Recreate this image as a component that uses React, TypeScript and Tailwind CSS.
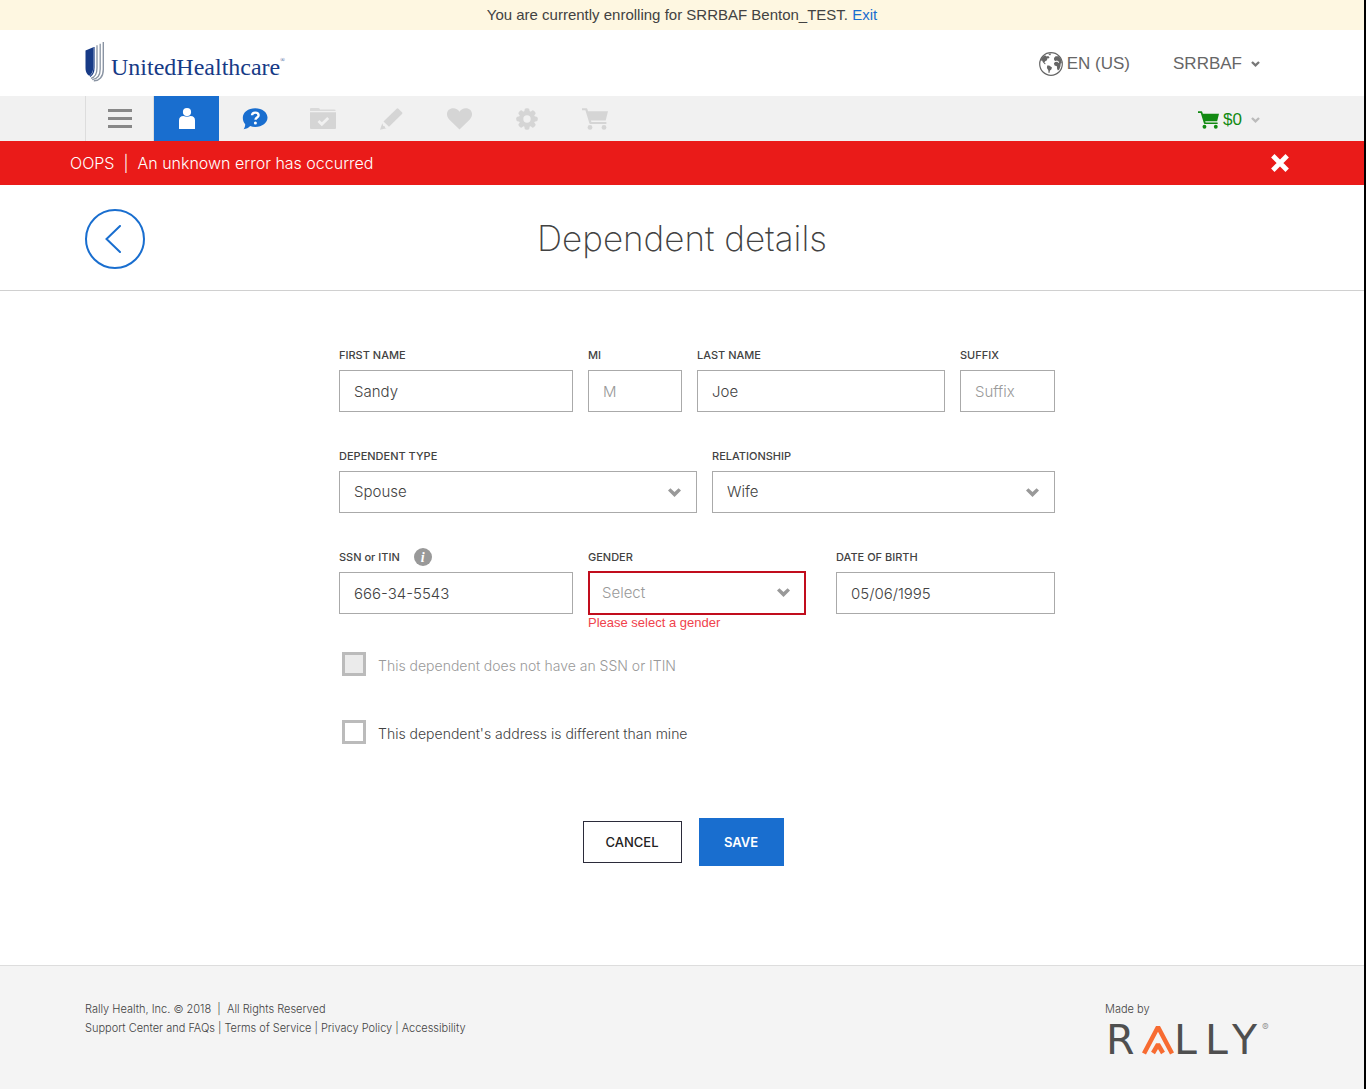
import type { ReactNode } from "react";

const sans = "font-['Liberation_Sans',Arial,sans-serif]";
const light = "font-['Inter',sans-serif] font-light";

function Shield() {
  return (
    <svg viewBox="0 0 20 41" className="mb-1 h-[41px] w-5" aria-hidden="true">
      <path d="M0.5 9.5 L8.3 6.3 V26 C8.3 30 7 33 4.5 34.8 C1.5 33.5 0.5 30 0.5 27 Z" fill="#173a86" />
      <path d="M9 6 V26.5 C9 31.5 7.500 34 5 35.500" fill="none" stroke="#173a86" strokeWidth="1.200" />
      <path d="M12 4.300 V27 C12 33 9.800 36.300 6 37.300" fill="none" stroke="#8a94a3" strokeWidth="1.300" />
      <path d="M15.200 2.700 V28 C15.200 34.500 12 38 7.200 38.600" fill="none" stroke="#8a94a3" strokeWidth="1.300" />
      <path d="M18.300 1 V28.500 C18.300 36 14 40 8.800 39.800" fill="none" stroke="#8a94a3" strokeWidth="1.400" />
    </svg>
  );
}

function Cart({ className }: { className: string }) {
  return (
    <svg viewBox="0 0 26 22" className={className} fill="currentColor" aria-hidden="true">
      <path d="M0 .3h4.2c.7 0 1 .4 1.2 1L6 3.2h20l-2.3 9.3H8.9l.5 1.500h14.3c1.200 0 1.200 2 0 2H8.400c-.6 0-.9-.3-1.100-.9L3.400 2.200H0z" />
      <circle cx="8" cy="19.400" r="2.400" />
      <circle cx="22" cy="19.400" r="2.400" />
    </svg>
  );
}

function Caret({ className }: { className: string }) {
  return (
    <svg viewBox="0 0 13 9" className={className} fill="currentColor" aria-hidden="true">
      <path d="M0 2.600L2.400.300 6.500 4.100 10.600.300 13 2.600 6.500 9z" />
    </svg>
  );
}

function Globe() {
  return (
    <svg viewBox="0 0 24 24" className="size-6" aria-hidden="true">
      <circle cx="12" cy="12" r="11.300" fill="none" stroke="#666" strokeWidth="1.200" />
      <g fill="#666">
        <path d="M2.200 6.500L5 3.700 6.600 3.600 7.600 4.400 9.200 4 10.600 5.400 9.400 6.400 8.400 6.300 8 8.200 6.200 9.200 5.400 10.400 6.900 12 5.800 12.200 3.900 10.200 3.100 8.500 2 8.800z" />
        <path d="M8.200 13.600L10.200 13.600 13 15.400 12.300 17.400 11 18.600 10.400 20.900 9.600 20.900 9.300 18.200 7.900 16z" />
        <path d="M9 1.800L12.400 1.500 11 3.400z" />
        <path d="M15 6L16.600 4.200 19.800 4.300 22 7.600 22.800 11 21.700 11.600 21.400 14.400 20.300 17.400 18.900 18.600 18.100 16.800 17.900 14.200 15.600 13.600 14.900 11.600 16 10 18.300 9.800 19.400 10.900 20.300 10 18 8.600 16.200 9 15.100 8z" />
      </g>
    </svg>
  );
}

const navIcons: { label: string; color: string; icon: ReactNode }[] = [
  {
    label: "Help",
    color: "text-[#196ecf]",
    icon: (
      <svg viewBox="0 0 26 22" className="h-[22px] w-[26px]" aria-hidden="true">
        <path d="M13.2.3c7 0 12.3 4.1 12.3 9.3S20.200 19 13.200 19c-1.900 0-3.500-.3-5-.9C6.500 19.900 4.300 21 1.600 21.300c1-1.300 1.600-3.100 1.600-5.100C1.600 14.500.800 12.200.800 9.700.800 4.400 6.200.3 13.200.3z" fill="currentColor" />
        <path d="M10 7.300C10.100 5.500 11.400 4.600 13.200 4.600c2 0 3.400 1 3.400 2.600 0 2.300-3.100 2.400-3.100 4.600" fill="none" stroke="#fff" strokeWidth="2.400" />
        <circle cx="13.400" cy="14.900" r="1.500" fill="#fff" />
      </svg>
    ),
  },
  {
    label: "Plans",
    color: "text-[#d5d5d5]",
    icon: (
      <svg viewBox="0 0 26 21" className="h-[21px] w-[26px]" aria-hidden="true">
        <path d="M0 3V1q0-1 1-1h7.500q1 0 1.300 1l.3.500H24.500q1 0 1 1V3z" fill="currentColor" opacity=".8" />
        <path d="M0 4.200H26V20q0 1-1 1H1q-1 0-1-1z" fill="currentColor" />
        <path d="M8.500 13l3.300 3.200 6.400-6.300" fill="none" stroke="#f1f1f1" strokeWidth="2.800" />
      </svg>
    ),
  },
  {
    label: "Edit",
    color: "text-[#d5d5d5]",
    icon: (
      <svg viewBox="0 0 23 22" className="h-[22px] w-[23px]" fill="currentColor" aria-hidden="true">
        <path d="M16.600.700q.9-.8 1.800 0l3.600 3.500q.8.900 0 1.800L9 18.800 3.500 13.500z" />
        <path d="M2.300 15.300l1 2.700 1.400.2.400 1.500 1.500.5L0 21.700z" />
      </svg>
    ),
  },
  {
    label: "Health",
    color: "text-[#d5d5d5]",
    icon: (
      <svg viewBox="0 0 25 22" className="h-[22px] w-[25px]" fill="currentColor" aria-hidden="true">
        <path d="M12.500 21.500L2.200 11.500C-2.300 6.500.500.300 6.200.300c2.700 0 5 1.400 6.300 3.400C13.800 1.700 16.100.300 18.800.300c5.700 0 8.500 6.200 4 11.200z" />
      </svg>
    ),
  },
  {
    label: "Settings",
    color: "text-[#d5d5d5]",
    icon: (
      <svg viewBox="-11 -11 22 22" className="size-[22px]" aria-hidden="true">
        <g fill="currentColor">
          {[0, 45, 90, 135].map((a) => (
            <rect key={a} x="-2.500" y="-10.700" width="5" height="21.400" rx="1.800" transform={`rotate(${a})`} />
          ))}
          <circle r="8.200" />
        </g>
        <circle r="3.700" fill="#f1f1f1" />
      </svg>
    ),
  },
  { label: "Checkout", color: "text-[#d5d5d5]", icon: <Cart className="h-[22px] w-[26px]" /> },
];

function Field({ id, label, error, info, children }: { id: string; label: string; error?: string; info?: boolean; children: ReactNode }) {
  return (
    <div className="relative min-w-0">
      <div className="flex h-5 items-center gap-[14px]">
        <label htmlFor={id} className="font-['Inter',sans-serif] text-[11px] font-medium text-[#424242]">{label}</label>
        {info && (
          <button type="button" aria-label="About SSN or ITIN" className="flex size-[18px] items-center justify-center rounded-full bg-[#999] font-['Liberation_Serif',serif] text-[14px] font-bold italic text-white">i</button>
        )}
      </div>
      <div className="mt-[5px]">{children}</div>
      {error && <p className={`${sans} absolute top-full left-0 text-[13px] leading-[18px] text-[#f0424c]`}>{error}</p>}
    </div>
  );
}

const box = "block w-full appearance-none rounded-none bg-white text-[15px] outline-none";

function TextBox({ id, value, placeholder }: { id: string; value?: string; placeholder?: string }) {
  return <input id={id} type="text" defaultValue={value} placeholder={placeholder} className={`${box} ${light} h-[42px] border border-[#aaa] px-[14px] text-[#424242] placeholder:text-[#999]`} />;
}

function SelectBox({ id, value, invalid }: { id: string; value: string; invalid?: boolean }) {
  return (
    <div className="relative">
      <select
        id={id}
        defaultValue={value}
        aria-invalid={invalid}
        className={`${box} ${light} ${invalid ? "-my-px h-11 border-2 border-[#c10d1d] px-3 text-[#999]" : "h-[42px] border border-[#aaa] px-[14px] text-[#424242]"}`}
      >
        <option>{value}</option>
      </select>
      <Caret className="pointer-events-none absolute top-[17px] right-4 h-[9px] w-[13px] text-[#999]" />
    </div>
  );
}

function Check({ id, label, disabled }: { id: string; label: string; disabled?: boolean }) {
  return (
    <div className="flex items-center gap-3 pl-[3px]">
      <input id={id} type="checkbox" disabled={disabled} className="size-6 appearance-none border-3 border-[#bbb] bg-white checked:bg-[#196ecf] disabled:bg-[#ebebeb]" />
      <label htmlFor={id} className={`${light} pt-[2px] text-[14px] ${disabled ? "text-[#999]" : "text-[#424242]"}`}>{label}</label>
    </div>
  );
}

const shell = "mx-auto w-full max-w-[1194px]";

export default function App() {
  return (
    <div className={`${sans} flex min-h-screen flex-col border-r-2 border-black bg-white text-[#424242]`}>
      <div className="flex h-[30px] items-center justify-center bg-[#fef7e1] text-[15px]">
        <p>You are currently enrolling for SRRBAF Benton_TEST. <a href="#exit" className="text-[#196ecf]">Exit</a></p>
      </div>

      <header className={`${shell} flex h-[66px] items-center justify-between`}>
        <a href="#home" aria-label="UnitedHealthcare" className="flex items-center gap-[6px]">
          <Shield />
          <span className="relative pt-2 font-['Liberation_Serif',serif] text-[24px] leading-8 text-[#173a86]">
            UnitedHealthcare<span className="absolute top-[14px] left-full text-[6px] leading-none">®</span>
          </span>
        </a>
        <div className="flex items-center gap-[43px] pt-[2px] pr-[19px] text-[17px] text-[#666]">
          <button type="button" className="flex items-center gap-1"><Globe />EN (US)</button>
          <button type="button" className="flex items-center gap-[9px]">SRRBAF<Caret className="h-[6px] w-[9px] text-[#777]" /></button>
        </div>
      </header>

      <nav className="bg-[#f1f1f1]">
        <div className={`${shell} flex h-[45px] items-stretch justify-between`}>
          <div className="flex items-stretch">
            <button type="button" aria-label="Menu" className="flex w-[69px] flex-col items-center justify-center gap-[5px] border-x border-[#ddd]">
              <span className="h-[3px] w-6 bg-[#888]" />
              <span className="h-[3px] w-6 bg-[#888]" />
              <span className="h-[3px] w-6 bg-[#888]" />
            </button>
            <button type="button" aria-label="Profile" className="mr-[2px] flex w-[65px] items-center justify-center bg-[#196ecf]">
              <svg viewBox="0 0 16 21" className="h-[21px] w-4" fill="#fff" aria-hidden="true">
                <circle cx="8" cy="4.100" r="4.100" />
                <path d="M0 20.500V12.500Q0 8 4.500 8 8 9.500 11.500 8 16 8 16 12.500V20.500q0 .500-.5.500H.500q-.500 0-.500-.5z" />
              </svg>
            </button>
            {navIcons.map((n) => (
              <button key={n.label} type="button" aria-label={n.label} className={`flex w-[68px] items-center justify-center ${n.color}`}>{n.icon}</button>
            ))}
          </div>
          <button type="button" className="flex items-center gap-1 pt-[3px] pr-[19px] text-[17px] text-[#128a12]">
            <Cart className="h-[18px] w-[21px]" />$0<Caret className="ml-[5px] h-[6px] w-[9px] text-[#bbb]" />
          </button>
        </div>
      </nav>

      <div role="alert" className="bg-[#ea1b19] text-white">
        <div className="mx-auto flex h-11 w-full max-w-[1224px] items-center justify-between pr-[5px]">
          <p className={`${light} text-base`}>OOPS&nbsp; |&nbsp; An unknown error has occurred</p>
          <button type="button" aria-label="Dismiss">
            <svg viewBox="0 0 18 18" className="size-[18px]" stroke="#fff" strokeWidth="4.800" aria-hidden="true">
              <path d="M1.800 1.800L16.200 16.200M16.200 1.800L1.800 16.200" />
            </svg>
          </button>
        </div>
      </div>

      <div className="border-b border-[#d0d0d0]">
        <div className={`${shell} grid h-[105px] grid-cols-[60px_1fr_60px] items-center pt-[2px]`}>
          <button type="button" aria-label="Back" className="flex size-[60px] items-center justify-center rounded-full border-2 border-[#196ecf] pr-1">
            <svg viewBox="0 0 16 28" className="h-7 w-4" fill="none" stroke="#196ecf" strokeWidth="2" strokeLinecap="round" aria-hidden="true">
              <path d="M15 1L1.500 14 15 27" />
            </svg>
          </button>
          <h1 className="pb-[2px] text-center font-['Inter',sans-serif] text-[35px] font-extralight leading-[48px]">Dependent details</h1>
        </div>
      </div>

      <main className="flex-1 px-4 pb-[99px]">
        <form className="mx-auto max-w-[746px] pt-[54px] pl-[30px]">
          <div className="grid grid-cols-[234fr_94fr_248fr_95fr] gap-[15px]">
            <Field id="first" label="FIRST NAME"><TextBox id="first" value="Sandy" /></Field>
            <Field id="mi" label="MI"><TextBox id="mi" placeholder="M" /></Field>
            <Field id="last" label="LAST NAME"><TextBox id="last" value="Joe" /></Field>
            <Field id="suffix" label="SUFFIX"><TextBox id="suffix" placeholder="Suffix" /></Field>
          </div>
          <div className="mt-[34px] grid grid-cols-[358fr_343fr] gap-[15px]">
            <Field id="type" label="DEPENDENT TYPE"><SelectBox id="type" value="Spouse" /></Field>
            <Field id="relationship" label="RELATIONSHIP"><SelectBox id="relationship" value="Wife" /></Field>
          </div>
          <div className="mt-[34px] grid grid-cols-[234fr_467fr] gap-[15px]">
            <Field id="ssn" label="SSN or ITIN" info><TextBox id="ssn" value="666-34-5543" /></Field>
            <div className="grid grid-cols-[218fr_219fr] gap-[30px]">
              <Field id="gender" label="GENDER" error="Please select a gender"><SelectBox id="gender" value="Select" invalid /></Field>
              <Field id="dob" label="DATE OF BIRTH"><TextBox id="dob" value="05/06/1995" /></Field>
            </div>
          </div>
          <div className="mt-[38px] flex flex-col gap-11">
            <Check id="no-ssn" label="This dependent does not have an SSN or ITIN" disabled />
            <Check id="address" label="This dependent's address is different than mine" />
          </div>
        </form>
        <div className="mt-[74px] flex items-center justify-center gap-[17px] pl-[2px] text-[13px]">
          <button type="button" className="h-[42px] w-[99px] border border-[#2b2b3a] pt-[2px] font-['Inter',sans-serif] font-medium text-[#222]">CANCEL</button>
          <button type="submit" className="h-12 w-[85px] bg-[#196ecf] pt-[2px] font-['Inter',sans-serif] font-semibold text-white">SAVE</button>
        </div>
      </main>

      <footer className="border-t border-[#ddd] bg-[#f4f4f4]">
        <div className={`${shell} flex h-[123px] justify-between pt-[34px]`}>
          <div className={`${light} text-[11px] leading-[19px]`}>
            <p>Rally Health, Inc. © 2018 &nbsp;|&nbsp; All Rights Reserved</p>
            <p className="flex gap-[3px]">
              <a href="#support">Support Center and FAQs</a>|
              <a href="#terms">Terms of Service</a>|
              <a href="#privacy">Privacy Policy</a>|
              <a href="#accessibility">Accessibility</a>
            </p>
          </div>
          <div className="w-[174px]">
            <p className={`${light} text-[11px] leading-[19px]`}>Made by</p>
            <svg viewBox="0 -10 168 60" className="-mt-[10px] h-[60px] w-[168px]" role="img" aria-label="Rally">
              <g fill="#4f4f4f" fontFamily="'DejaVu Sans', sans-serif" fontSize="41">
                <text x="1" y="35">R</text>
                <text x="69" y="35">L</text>
                <text x="100" y="35">L</text>
                <text x="127" y="35">Y</text>
              </g>
              <g fill="none" stroke="#f76b31" strokeWidth="4.500">
                <path d="M39 34.500L53 8L67 34.500" strokeLinejoin="bevel" />
                <path d="M48 34L53 25.500L58 34" strokeLinejoin="bevel" />
              </g>
              <text x="157" y="12" fill="#999" fontFamily="Inter, sans-serif" fontSize="10">®</text>
            </svg>
          </div>
        </div>
      </footer>
    </div>
  );
}
